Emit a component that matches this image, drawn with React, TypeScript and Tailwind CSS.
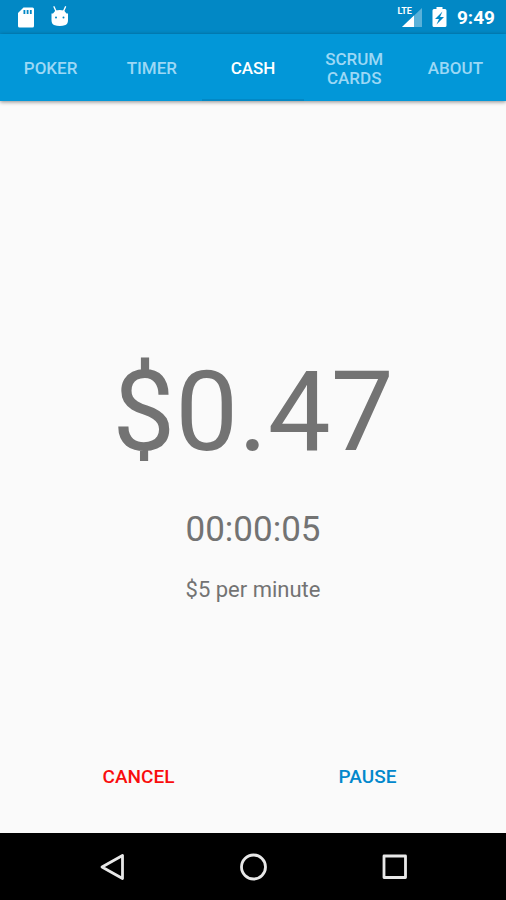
// App.tsx — meeting cost ticker: tabs, running total and timer controls
import React, { useState } from 'react';
import clsx from 'clsx';

const TABS = ['Poker', 'Timer', 'Cash', 'Scrum Cards', 'About'];

const StatusBar: React.FC = () => (
    <header className="h-[34px] flex-none flex items-center justify-between bg-[#0288c5] pl-[17px] pr-[11px] text-white">
        <div className="flex items-center gap-4">
            {/* SD card */}
            <svg width="18" height="22" viewBox="0 0 18 22" aria-hidden="true">
                <path fill="#fff" d="M6.500 1.500h9Q17 1.500 17 3v17q0 1.500-1.500 1.500h-13Q1 21.500 1 20V7z" />
                <path fill="#0288c5" d="M6.500 4h1.800v4h-1.800zM9.700 4h1.800v4H9.700zM12.900 4h1.800v4h-1.800z" />
            </svg>
            {/* Debug bot */}
            <svg width="18" height="22" viewBox="0 0 18 22" aria-hidden="true">
                <path d="M3 .8l2 4.500M14.500 .8l-2 4.500" stroke="#fff" strokeWidth="1.400" strokeLinecap="round" />
                <path fill="#fff" d="M.5 7.500h1.500L4.500 4.500q4.300-1 8.500 0L15.500 7.500H17V14q0 4-2.500 5-5.700 2-11.500 0-2.500-1-2.500-5z" />
                <circle cx="5" cy="11.500" r="1" fill="#0288c5" />
                <circle cx="12.500" cy="11.500" r="1" fill="#0288c5" />
            </svg>
        </div>
        <div className="flex items-center">
            {/* Signal */}
            <div className="relative w-[26px] h-[22px]">
                <svg className="absolute inset-0" width="26" height="22" viewBox="0 0 26 22" aria-hidden="true">
                    <path fill="#fff" fillOpacity="0.350" d="M25 2v19H5z" />
                    <path fill="#fff" d="M17 9.600V21H5z" />
                </svg>
                <span className="absolute right-[11px] top-0 bg-[#0288c5] font-bold text-[9px] leading-[11px]">LTE</span>
            </div>
            {/* Battery */}
            <svg className="ml-[9px]" width="15" height="22" viewBox="0 0 15 22" aria-hidden="true">
                <path fill="#fff" d="M4.500 1h6v2H13q1.500 0 1.500 1.500v15Q14.500 21 13 21H2Q.5 21 .5 19.500v-15Q.5 3 2 3h2.500z" />
                <path fill="#0288c5" d="M10.500 5.500L3 13h4l-2.500 5.500L12 11H8z" />
            </svg>
            <time className="ml-[10px] pt-[2px] text-[19px] leading-6 font-bold">9:49</time>
        </div>
    </header>
);

const NavBar: React.FC = () => (
    <nav className="h-[67px] flex-none flex items-center bg-black px-[8%]">
        <NavButton label="Back">
            <path d="M25.500 2.500v23L5 14z" />
        </NavButton>
        <NavButton label="Home">
            <circle cx="14.500" cy="14" r="12" />
        </NavButton>
        <NavButton label="Overview">
            <rect x="3" y="3" width="21.500" height="21.500" />
        </NavButton>
    </nav>
);

const NavButton: React.FC<{ label: string; children: React.ReactNode }> = ({ label, children }) => (
    <button aria-label={label} className="flex-1 h-full flex items-center justify-center">
        <svg width="28" height="28" viewBox="0 0 28 28" fill="none" stroke="#e8e8e8" strokeWidth="2.800" strokeLinejoin="round">
            {children}
        </svg>
    </button>
);

export default function App() {
    const [activeTab, setActiveTab] = useState('Cash');

    return (
        <div className="min-h-screen flex flex-col bg-[#fafafa] font-['Roboto',sans-serif]">
            <StatusBar />

            <div role="tablist" className="relative h-[67px] flex-none flex bg-[#0297d8] shadow-[0_1px_4px_rgba(0,0,0,0.450)]">
                {TABS.map(tab => (
                    <button
                        key={tab}
                        role="tab"
                        aria-selected={tab === activeTab}
                        onClick={() => setActiveTab(tab)}
                        className={clsx(
                            'flex-1 min-w-0 px-4 pt-1 border-b-2 uppercase text-[17px] leading-[19px] font-medium',
                            tab === activeTab ? 'text-white border-[#0288c5]' : 'text-[#9cd8f5] border-transparent',
                        )}
                    >
                        {tab}
                    </button>
                ))}
            </div>

            <main className="flex-1 flex flex-col text-[#737373]">
                <div className="flex-1 flex flex-col items-center justify-center pt-[94px]">
                    <div className="text-[112px] leading-[132px]">$0.47</div>
                    <div className="mt-[31px] text-[35px] leading-[42px]">00:00:05</div>
                    <div className="mt-[26px] text-[22px] leading-[26px]">$5 per minute</div>
                </div>
                <div className="flex px-6 pb-8 text-[19px] leading-6 font-medium">
                    <button className="flex-1 h-12 uppercase text-[#f90d0d]">Cancel</button>
                    <button className="flex-1 h-12 uppercase text-[#0288cc]">Pause</button>
                </div>
            </main>

            <NavBar />
        </div>
    );
}
